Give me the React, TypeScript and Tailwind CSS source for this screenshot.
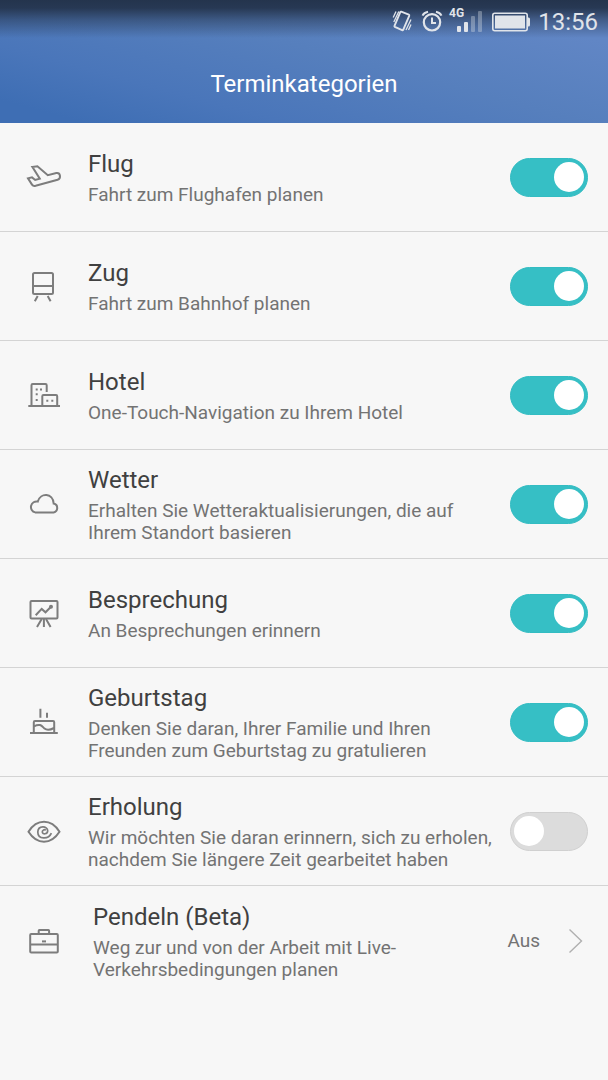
import { useState } from 'react';
import type { ReactNode } from 'react';

type Category = {
  id: string;
  title: string;
  description: string;
  enabled: boolean;
  icon: ReactNode;
};

const categories: Category[] = [
  {
    id: 'flight',
    title: 'Flug',
    description: 'Fahrt zum Flughafen planen',
    enabled: true,
    icon: (
      <path d="M6.3 7.9 11.4 7.2 21.8 16.2 30.3 14C34.5 13.3 35.4 19.3 31.6 20.7L9.6 26.8Q7.2 27.4 6 25.6L2 19.4 6 18.4 9.2 21 13.8 19.6Z" />
    ),
  },
  {
    id: 'train',
    title: 'Zug',
    description: 'Fahrt zum Bahnhof planen',
    enabled: true,
    icon: (
      <>
        <rect x="7" y="5" width="20" height="21" rx="1.5" />
        <path d="M7 18H27M11.7 28 8.8 33.3M21.7 28 24.6 33.3" />
      </>
    ),
  },
  {
    id: 'hotel',
    title: 'Hotel',
    description: 'One-Touch-Navigation zu Ihrem Hotel',
    enabled: true,
    icon: (
      <>
        <path d="M2.3 29H34M5.5 29V8.2Q5.5 7 6.7 7H19.5Q20.7 7 20.7 8.2V15M16.3 29V19.2Q16.3 18 17.5 18H30Q31.2 18 31.2 19.2V29" />
        <path
          d="M9.7 11.4h2v2h-2zM14 11.4h2v2h-2zM9.7 16.3h2v2h-2zM9.7 22h2v2h-2zM20.3 22.7h2v2h-2zM25.3 22.7h2v2h-2z"
          fill="currentColor"
          stroke="none"
        />
      </>
    ),
  },
  {
    id: 'weather',
    title: 'Wetter',
    description: 'Erhalten Sie Wetteraktualisierungen, die auf Ihrem Standort basieren',
    enabled: true,
    icon: (
      <path d="M9.2 26.4A5.5 5.5 0 0 1 11.8 15.6C14.3 6.4 27.1 6.8 27.7 17.6A4.5 4.5 0 0 1 27.6 26.4Z" />
    ),
  },
  {
    id: 'meeting',
    title: 'Besprechung',
    description: 'An Besprechungen erinnern',
    enabled: true,
    icon: (
      <>
        <rect x="4.5" y="6" width="27" height="17.5" rx="1" />
        <path d="M9.7 20.3 15.7 13.9 19.5 17.3 25 11.7M15.7 24 11 32M17.9 24V32M20 24 24.6 32" />
        <circle cx="25" cy="11.7" r="2" fill="currentColor" stroke="none" />
      </>
    ),
  },
  {
    id: 'birthday',
    title: 'Geburtstag',
    description: 'Denken Sie daran, Ihrer Familie und Ihren Freunden zum Geburtstag zu gratulieren',
    enabled: true,
    icon: (
      <>
        <path d="M4 29H31.8M7.8 29V18.2Q7.8 17 9 17H27Q28.2 17 28.2 18.2V29M14.4 4.8V13.7M21 8.8V13.7" />
        <path d="M8 22.3C14.5 19 16 22.4 18.5 24.5S24.5 25.8 28 24" />
      </>
    ),
  },
  {
    id: 'rest',
    title: 'Erholung',
    description: 'Wir möchten Sie daran erinnern, sich zu erholen, nachdem Sie längere Zeit gearbeitet haben',
    enabled: false,
    icon: (
      <>
        <path d="M2.5 18.7C11 5.5 25 5.5 33.5 18.7C25 32 11 32 2.5 18.7Z" />
        <path
          d="M19.7 17.4C18.6 16 16.2 17 16.3 19C16.5 21.6 21.6 21.5 21.7 17.8C21.6 12.6 12 12.2 11.8 19C11.8 26.6 22.5 26.8 25.4 20.2"
          strokeWidth="1.7"
        />
      </>
    ),
  },
];

function RowIcon({ children }: { children: ReactNode }) {
  return (
    <svg
      viewBox="0 0 36 36"
      className="h-9 w-9 shrink-0 text-[#7d7d7d]"
      fill="none"
      stroke="currentColor"
      strokeWidth="2"
      aria-hidden="true"
    >
      {children}
    </svg>
  );
}

function RowText({ title, description }: { title: string; description: string }) {
  return (
    <span className="flex min-w-0 flex-1 flex-col gap-1.5 pt-0.5">
      <span className="text-2xl leading-7 text-[#404040]">{title}</span>
      <span className="text-[19px] leading-[22px] text-[#737373]">{description}</span>
    </span>
  );
}

function CategoryRow({ category }: { category: Category }) {
  const [enabled, setEnabled] = useState(category.enabled);

  return (
    <li className="border-b border-[#d4d4d4]">
      <label htmlFor={category.id} className="flex min-h-[108px] items-center pr-5 pl-[26px]">
        <RowIcon>{category.icon}</RowIcon>
        <span className="flex min-w-0 flex-1 pr-2 pl-[26px]">
          <RowText title={category.title} description={category.description} />
        </span>
        <input
          id={category.id}
          type="checkbox"
          role="switch"
          checked={enabled}
          onChange={(event) => setEnabled(event.target.checked)}
          className="flex h-[39px] w-[78px] shrink-0 appearance-none items-center rounded-full border border-[#d0d0d0] bg-[#dcdcdc] px-[3px] before:h-[30px] before:w-[30px] before:rounded-full before:bg-white checked:justify-end checked:border-[#33bcc2] checked:bg-[#36bfc5]"
        />
      </label>
    </li>
  );
}

function StatusBar() {
  return (
    <div className="flex h-11 items-center justify-end pr-[10px] text-[#e0e4ea]">
      <svg viewBox="0 0 20 24" className="h-6 w-5" fill="none" stroke="currentColor" aria-label="Vibration">
        <path
          d="M9.2 1.7 16.8 4.7Q17.5 5 17.2 5.8L11.2 19.8Q10.8 20.5 10.1 20.2L2.8 16.8Q2.2 16.5 2.5 15.8L8.3 2.2Q8.6 1.5 9.2 1.7Z"
          strokeWidth="1.9"
        />
        <path d="M4 1.5 1.2 7.6M6.8 1.5 1.8 12M19 9.5 14 20M19 14.5 16.5 20" strokeWidth="1.3" />
      </svg>
      <svg viewBox="0 0 22 24" className="ml-[9px] h-6 w-[22px]" fill="none" stroke="currentColor" aria-label="Wecker">
        <circle cx="11" cy="12.3" r="8.2" strokeWidth="2.2" />
        <path d="M11 7.5V13H15M1.5 5.6Q3 2.6 7 1.7M20.5 5.6Q19 2.6 15 1.7" strokeWidth="2" />
      </svg>
      <svg viewBox="0 0 34 28" className="mb-[8px] ml-[5px] h-7 w-[34px]" fill="currentColor" aria-label="4G">
        <text x="1" y="13" className="font-['Roboto',sans-serif] text-[12px] font-bold">
          4G
        </text>
        <rect x="9" y="22" width="4" height="6" rx="1" />
        <rect x="16" y="18" width="4" height="10" rx="1" />
        <rect x="23" y="12" width="4" height="16" rx="1" opacity="0.35" />
        <rect x="30" y="7" width="4" height="21" rx="1" opacity="0.35" />
      </svg>
      <svg viewBox="0 0 38 20" className="ml-[10px] h-5 w-[38px]" fill="none" aria-label="Akku">
        <rect x="0.8" y="1.3" width="34.4" height="17.4" rx="2" stroke="currentColor" strokeWidth="1.6" />
        <rect x="3" y="3.5" width="30" height="13" fill="currentColor" />
        <path d="M35 5.5h1.5q1.5 0 1.5 1.5v6q0 1.5-1.5 1.5H35z" fill="currentColor" />
      </svg>
      <time className="ml-2 text-2xl leading-7">13:56</time>
    </div>
  );
}

export default function App() {
  return (
    <div className="min-h-screen bg-[#f7f7f7] font-['Roboto',sans-serif]">
      <header className="bg-[linear-gradient(to_bottom,#24344d_0px,#24344df0_8px,#24344d80_20px,#24344d00_38px),linear-gradient(15deg,#3e6eb4_8%,#4a76ba_27%,#567fbd_55%,#6186c5_85%)]">
        <StatusBar />
        <h1 className="flex h-[79px] items-center justify-center text-2xl text-white">Terminkategorien</h1>
      </header>
      <main>
        <ul>
          {categories.map((category) => (
            <CategoryRow key={category.id} category={category} />
          ))}
          <li>
            <a href="#pendeln" className="flex min-h-[110px] items-center pr-5 pl-[26px]">
              <RowIcon>
                <rect x="4.2" y="11" width="27.6" height="18.4" rx="1" />
                <path d="M4.2 21.6H31.8M12.7 11V7.7Q12.7 7 13.4 7H22.4Q23.1 7 23.1 7.7V11" />
                <path d="M16 17.4h4v2h-4z" fill="currentColor" stroke="none" />
              </RowIcon>
              <span className="flex min-w-0 flex-1 pr-5 pl-[31px]">
                <RowText
                  title="Pendeln (Beta)"
                  description="Weg zur und von der Arbeit mit Live-Verkehrsbedingungen planen"
                />
              </span>
              <span className="text-[19px] leading-[22px] text-[#737373]">Aus</span>
              <svg
                viewBox="0 0 20 26"
                className="ml-7 h-[26px] w-5 shrink-0"
                fill="none"
                stroke="#b0b0b0"
                strokeWidth="1.4"
                aria-hidden="true"
              >
                <path d="M1.5 1.5 13.5 13 1.5 24.5" />
              </svg>
            </a>
          </li>
        </ul>
      </main>
    </div>
  );
}
